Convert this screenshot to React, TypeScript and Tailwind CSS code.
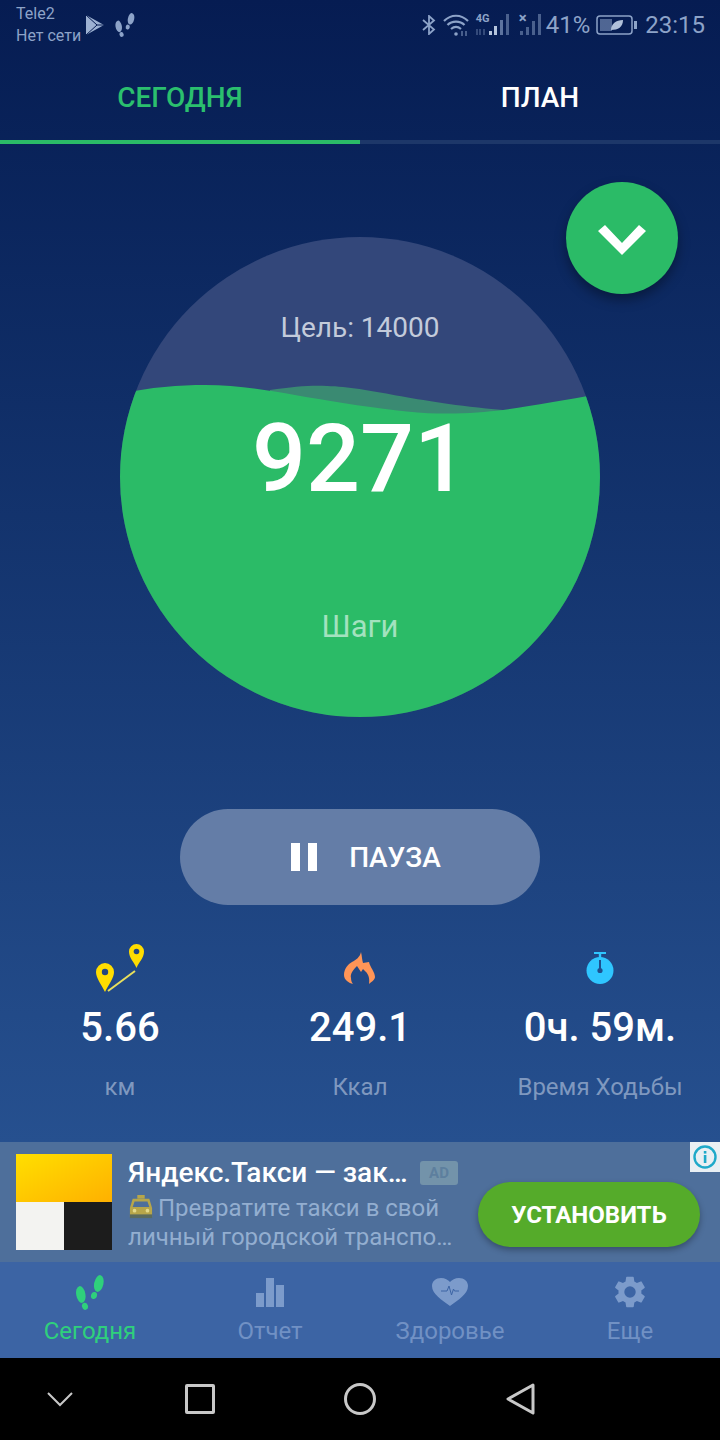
import React from 'react';

const font = { fontFamily: 'Roboto, "Noto Sans", sans-serif' };

const FootprintsIcon = ({ className, fill }: { className?: string; fill: string }) => (
  <svg viewBox="0 0 28 35" className={className} fill={fill}>
    <ellipse cx="4.8" cy="19.5" rx="4.6" ry="8.5" transform="rotate(-10 4.8 19.5)" />
    <ellipse cx="9" cy="31.3" rx="3" ry="3.6" transform="rotate(-15 9 31.3)" />
    <ellipse cx="22.8" cy="8.5" rx="4.6" ry="8.5" transform="rotate(12 22.8 8.5)" />
    <ellipse cx="18" cy="20.5" rx="3" ry="3.6" transform="rotate(15 18 20.5)" />
  </svg>
);

const StatusBar = () => (
  <div className="h-[56px] flex items-start justify-between pl-[16px] pr-[15px]">
    <div className="flex items-start">
      <div className="text-[16px] leading-[22px] pt-[3px] text-[#8da3c8] w-[70px]">
        <div>Tele2</div>
        <div>Нет сети</div>
      </div>
      {/* store icon */}
      <svg viewBox="0 0 18 20" className="w-[18px] h-[20px] mt-[15px]">
        <path d="M0 0 L18 10 L0 20 Z" fill="#9db1d2" />
        <path d="M0 0 L11 10 L0 20 M11 10 L18 10" fill="none" stroke="#061c52" strokeWidth="1" />
      </svg>
      <FootprintsIcon className="w-[20px] h-[24px] ml-[11px] mt-[13px]" fill="#8da3c8" />
    </div>
    <div className="flex items-center h-[50px] text-[#8da3c8]">
      <svg viewBox="0 0 14 20" className="w-[14px] h-[20px]" fill="none" stroke="#8da3c8" strokeWidth="1.8">
        <path d="M1 5 L12 14.5 L7 19 L7 1 L12 5.5 L1 15" />
      </svg>
      <svg viewBox="0 0 26 22" className="w-[26px] h-[22px] ml-[7px]" fill="none" stroke="#8da3c8" strokeWidth="2.2">
        <path d="M1 7 C8 0 18 0 25 7" />
        <path d="M4.5 11 C9 6.5 17 6.5 21.5 11" />
        <path d="M8 15 C11 12.5 15 12.5 18 15" />
        <circle cx="13" cy="20" r="1.8" fill="#8da3c8" stroke="none" />
        <path d="M19 17 V22 M23 17 V22" stroke="#8da3c8" strokeWidth="1.4" opacity="0.7" />
      </svg>
      <div className="relative w-[36px] h-[22px] ml-[7px]">
        <span className="absolute left-0 top-[-1px] text-[11px] leading-[12px] font-bold">4G</span>
        <svg viewBox="0 0 36 22" className="w-[36px] h-[22px]" fill="#8da3c8">
          <path d="M1 15 V21 M4 15 V21 M8 15 V21" stroke="#8da3c8" strokeWidth="1.5" opacity="0.45" />
          <rect x="13" y="17" width="3" height="4" fill="#b5c4dc" />
          <rect x="18" y="12" width="3" height="9" fill="#b5c4dc" />
          <rect x="24" y="6" width="3" height="15" opacity="0.65" />
          <rect x="30" y="0" width="3" height="21" opacity="0.5" />
        </svg>
      </div>
      <div className="relative w-[24px] h-[22px] ml-[7px]">
        <span className="absolute left-0 top-[-3px] text-[15px] leading-[14px] font-bold">×</span>
        <svg viewBox="0 0 24 22" className="w-[24px] h-[22px]" fill="#8da3c8" opacity="0.5">
          <rect x="1" y="17" width="3" height="4" />
          <rect x="7" y="13" width="3" height="8" />
          <rect x="13" y="7" width="3" height="14" />
          <rect x="19" y="0" width="3" height="21" />
        </svg>
      </div>
      <span className="text-[24px] ml-[3px]">41%</span>
      <svg viewBox="0 0 42 20" className="w-[42px] h-[20px] ml-[6px]" fill="none">
        <rect x="1" y="1" width="35" height="18" rx="3" stroke="#8da3c8" strokeWidth="1.5" />
        <rect x="4" y="4" width="12" height="12" fill="#8da3c8" opacity="0.55" />
        <path d="M15 15 C15 9 20 5 27 5 C27 12 22 15 15 15 Z" fill="#b0c0da" />
        <rect x="38" y="6" width="3" height="8" fill="#8da3c8" />
      </svg>
      <span className="text-[24px] ml-[7px]">23:15</span>
    </div>
  </div>
);

const Tabs = () => (
  <div className="grid grid-cols-2 h-[88px]">
    <div className="flex flex-col">
      <div className="flex-1 flex items-center justify-center text-[28px] font-medium text-[#2bbf6e]">СЕГОДНЯ</div>
      <div className="h-[4px] bg-[#2bbb67]" />
    </div>
    <div className="flex flex-col">
      <div className="flex-1 flex items-center justify-center text-[28px] font-medium text-white">ПЛАН</div>
      <div className="h-[4px] bg-[#1d3769]" />
    </div>
  </div>
);

const StepCircle = () => (
  <div className="relative w-[480px] h-[480px] mx-auto rounded-full overflow-hidden bg-[#33477a]">
    <svg viewBox="0 0 480 480" className="absolute inset-0 w-full h-full">
      <path d="M150 153 C175 149 195 148 207 149 C250 150 290 165 383 173 L383 200 L150 200 Z" fill="#3a8a72" />
      <path
        d="M0 157 C30 150 60 148 85 148 C130 148 170 158 223 166 C262 172 292 176 318 176.5 C345 177 365 175 383 173 C410 169 445 163 480 157 L480 480 L0 480 Z"
        fill="#2bbb67"
      />
    </svg>
    <div className="absolute inset-0 flex flex-col items-center">
      <div className="mt-[73px] h-[36px] leading-[36px] text-[28px] text-[#c3cbdb]">Цель: 14000</div>
      <div className="mt-[57px] h-[112px] leading-[112px] text-[95px] font-medium text-white">9271</div>
      <div className="mt-[92px] h-[40px] leading-[40px] text-[31px] text-[#a3e2bf]">Шаги</div>
    </div>
  </div>
);

const Stat = ({ icon, value, label }: { icon: React.ReactNode; value: string; label: string }) => (
  <div className="flex flex-col items-center">
    <div className="h-[56px] flex items-center justify-center">{icon}</div>
    <div className="mt-[10px] h-[44px] leading-[44px] text-[40px] font-medium text-white">{value}</div>
    <div className="mt-[22px] h-[30px] leading-[30px] text-[24px] text-[#7f98bf]">{label}</div>
  </div>
);

const PinsIcon = () => (
  <svg viewBox="0 0 50 49" className="w-[50px] h-[49px]">
    <path d="M10 48 C6 40 1 34 1 28 A9 9 0 0 1 19 28 C19 34 14 40 10 48 Z" fill="#ffdd00" />
    <circle cx="10" cy="28" r="3.2" fill="#24467f" />
    <path d="M41.5 24 C39 18 34 14 34 7.5 A7.5 7.5 0 0 1 49 7.5 C49 14 44 18 41.5 24 Z" fill="#ffdd00" />
    <circle cx="41.5" cy="7.5" r="2.8" fill="#24467f" />
    <path d="M13 47 L40 27" stroke="#e8df5c" strokeWidth="2" />
  </svg>
);

const FlameIcon = () => (
  <svg viewBox="0 0 32 32" className="w-[32px] h-[32px]" fill="#ff9557">
    <path d="M17 0 C18 4 18 8 19 11 L25 10 C26 15 31 20 31 25 C31 28 27 30 25 32 C26 26 24 22 22 20 L19 17 L17 20 L13 14 C9 18 6 22 7 26 C7 29 8 31 9 32 C5 31 0 28 0 23 C0 17 4 12 8 10 C12 8 16 5 17 0 Z" />
  </svg>
);

const TimerIcon = () => (
  <svg viewBox="0 0 28 32" className="w-[28px] h-[32px]">
    <rect x="8" y="0" width="12" height="2" fill="#2fc6ff" />
    <rect x="12.8" y="1" width="2.4" height="5" fill="#2fc6ff" />
    <circle cx="14" cy="18.5" r="13.5" fill="#2fc6ff" />
    <rect x="13" y="8" width="2" height="10" fill="#1f4f8e" />
    <circle cx="14" cy="18.5" r="2.6" fill="#1f4f8e" />
  </svg>
);

const TaxiIcon = () => (
  <svg viewBox="0 0 28 26" className="w-[26px] h-[24px] inline-block align-[-3px] mr-[4px]">
    <rect x="10" y="0" width="8" height="4" fill="#b7a64a" />
    <path d="M5 4 H23 L26 14 V24 H2 V14 Z" fill="#b7a64a" />
    <path d="M7 7 H21 L23 13 H5 Z" fill="#4e6f9b" />
    <rect x="2" y="21" width="24" height="4" fill="#5a6b5e" />
    <circle cx="7" cy="17" r="2" fill="#e3d98a" />
    <circle cx="21" cy="17" r="2" fill="#e3d98a" />
  </svg>
);

const AdBanner = () => (
  <div className="relative h-[120px] bg-[#4e6f9b] flex items-start pl-[16px] pt-[12px]">
    <div className="w-[96px] h-[96px] shrink-0 flex flex-col">
      <div className="h-[48px] bg-gradient-to-br from-[#ffdf00] to-[#ffb000]" />
      <div className="h-[48px] flex">
        <div className="w-[48px] bg-[#f3f3f1]" />
        <div className="w-[48px] bg-[#1c1c1c]" />
      </div>
    </div>
    <div className="ml-[16px] w-[334px] shrink-0 pt-[1px]">
      <div className="flex items-center h-[36px]">
        <span className="w-[282px] text-[28px] font-medium text-white whitespace-nowrap">Яндекс.Такси — зак…</span>
        <span className="ml-[10px] w-[38px] h-[24px] rounded-[3px] bg-[#7393aa] flex items-center justify-center text-[15px] font-bold text-[#5d7f9e]">
          AD
        </span>
      </div>
      <div className="text-[24px] leading-[29px] mt-[3px] text-[#93aed0] whitespace-nowrap">
        <div><TaxiIcon />Превратите такси в свой</div>
        <div>личный городской транспо…</div>
      </div>
    </div>
    <div className="mt-[28px] ml-[16px] w-[222px] h-[65px] shrink-0 rounded-full bg-[#55ab2a] shadow-[0_3px_6px_rgba(0,0,0,0.3)] flex items-center justify-center text-[24px] font-bold text-white">
      УСТАНОВИТЬ
    </div>
    <div className="absolute right-0 top-0 w-[30px] h-[30px] bg-[#e9eff3] flex items-center justify-center">
      <svg viewBox="0 0 24 24" className="w-[24px] h-[24px]" fill="none">
        <circle cx="12" cy="12" r="10.5" stroke="#1fa9c9" strokeWidth="2.4" />
        <rect x="10.8" y="10" width="2.6" height="8" fill="#1fa9c9" />
        <rect x="10.8" y="6" width="2.6" height="2.6" fill="#1fa9c9" />
      </svg>
    </div>
  </div>
);

const NavItem = ({ icon, label, active }: { icon: React.ReactNode; label: string; active?: boolean }) => (
  <div className="flex flex-col items-center">
    <div className="h-[40px] flex items-center justify-center">{icon}</div>
    <div className={`mt-[4px] h-[30px] leading-[30px] text-[24px] ${active ? 'text-[#2fd07c]' : 'text-[#7191c4]'}`}>{label}</div>
  </div>
);

const BottomNav = () => (
  <div className="h-[96px] bg-[#3c64a4] grid grid-cols-4 pt-[10px]">
    <NavItem active label="Сегодня" icon={<FootprintsIcon className="w-[28px] h-[35px]" fill="#2fd07c" />} />
    <NavItem
      label="Отчет"
      icon={
        <svg viewBox="0 0 28 29" className="w-[28px] h-[29px]" fill="#7c9bcb">
          <rect x="0" y="15" width="8" height="14" />
          <rect x="10" y="0" width="8" height="29" />
          <rect x="20" y="7" width="8" height="22" />
        </svg>
      }
    />
    <NavItem
      label="Здоровье"
      icon={
        <svg viewBox="0 0 36 28" className="w-[36px] h-[28px]">
          <path d="M18 28 C10 22 0 16 0 8 C0 3 4 0 9 0 C13 0 16 2 18 4 C20 2 23 0 27 0 C32 0 36 3 36 8 C36 16 26 22 18 28 Z" fill="#7c9bcb" />
          <path d="M9 13 H15 L17 8 L19.5 17 L21.5 11 L22.5 13 H27" fill="none" stroke="#3c64a4" strokeWidth="1" />
        </svg>
      }
    />
    <NavItem
      label="Еще"
      icon={
        <svg viewBox="0 0 24 24" className="w-[38px] h-[38px]" fill="#7c9bcb">
          <path d="M19.14 12.94c.04-.3.06-.61.06-.94s-.02-.64-.07-.94l2.03-1.58a.5.5 0 0 0 .12-.64l-1.92-3.32a.5.5 0 0 0-.61-.22l-2.39.96a7 7 0 0 0-1.62-.94l-.36-2.54a.5.5 0 0 0-.5-.42h-3.84a.5.5 0 0 0-.5.42l-.36 2.54c-.59.24-1.13.57-1.62.94l-2.39-.96a.5.5 0 0 0-.61.22L2.65 8.84a.5.5 0 0 0 .12.64l2.03 1.58c-.05.3-.08.63-.08.94s.02.64.07.94l-2.03 1.58a.5.5 0 0 0-.12.64l1.92 3.32c.13.23.39.3.61.22l2.39-.96c.5.38 1.03.7 1.62.94l.36 2.54c.05.24.24.42.5.42h3.84c.25 0 .46-.18.5-.42l.36-2.54c.59-.24 1.13-.56 1.62-.94l2.39.96c.22.08.48 0 .61-.22l1.92-3.32a.5.5 0 0 0-.12-.64l-2.01-1.58zM12 15.6A3.6 3.6 0 1 1 12 8.4a3.6 3.6 0 0 1 0 7.2z" />
        </svg>
      }
    />
  </div>
);

const SystemNav = () => (
  <div className="h-[82px] bg-black grid grid-cols-[120px_160px_160px_160px_120px] items-center">
    <div className="flex justify-center">
      <svg viewBox="0 0 26 15" className="w-[26px] h-[15px]" fill="none" stroke="#c8c8c8" strokeWidth="2">
        <path d="M1 1 L13 13 L25 1" />
      </svg>
    </div>
    <div className="flex justify-center">
      <div className="w-[30px] h-[30px] border-[3px] border-[#c8c8c8] rounded-[2px]" />
    </div>
    <div className="flex justify-center">
      <div className="w-[32px] h-[32px] border-[3px] border-[#c8c8c8] rounded-full" />
    </div>
    <div className="flex justify-center">
      <svg viewBox="0 0 29 32" className="w-[29px] h-[32px]" fill="none" stroke="#c8c8c8" strokeWidth="3" strokeLinejoin="round">
        <path d="M27 2 L2 16 L27 30 Z" />
      </svg>
    </div>
    <div />
  </div>
);

export default function App() {
  return (
    <div className="w-[720px] h-[1440px] overflow-hidden flex flex-col" style={font}>
      <div className="relative h-[1142px] bg-gradient-to-b from-[#061c52] to-[#26508f] flex flex-col">
        <StatusBar />
        <Tabs />
        <div className="pt-[93px]">
          <StepCircle />
        </div>
        <div className="absolute left-[566px] top-[182px] w-[112px] h-[112px] rounded-full bg-[#2bbb67] shadow-[0_6px_12px_rgba(0,0,0,0.35)] flex items-center justify-center">
          <svg viewBox="0 0 48 30" className="w-[48px] h-[30px] mt-[4px]" fill="#fff">
            <path d="M7 0 L24 18 L41 0 L48 6 L24 30 L0 6 Z" />
          </svg>
        </div>
        <div className="mt-[92px] mx-auto w-[360px] h-[96px] rounded-full bg-[#647da7] flex items-center justify-center pl-[12px]">
          <div className="flex gap-[8px] mr-[32px]">
            <div className="w-[9px] h-[28px] bg-white" />
            <div className="w-[9px] h-[28px] bg-white" />
          </div>
          <span className="text-[28px] leading-[32px] pt-[2px] font-medium text-white">ПАУЗА</span>
        </div>
        <div className="grid grid-cols-3 mt-[35px]">
          <Stat icon={<PinsIcon />} value="5.66" label="км" />
          <Stat icon={<FlameIcon />} value="249.1" label="Ккал" />
          <Stat icon={<TimerIcon />} value="0ч. 59м." label="Время Ходьбы" />
        </div>
      </div>
      <AdBanner />
      <BottomNav />
      <SystemNav />
    </div>
  );
}
